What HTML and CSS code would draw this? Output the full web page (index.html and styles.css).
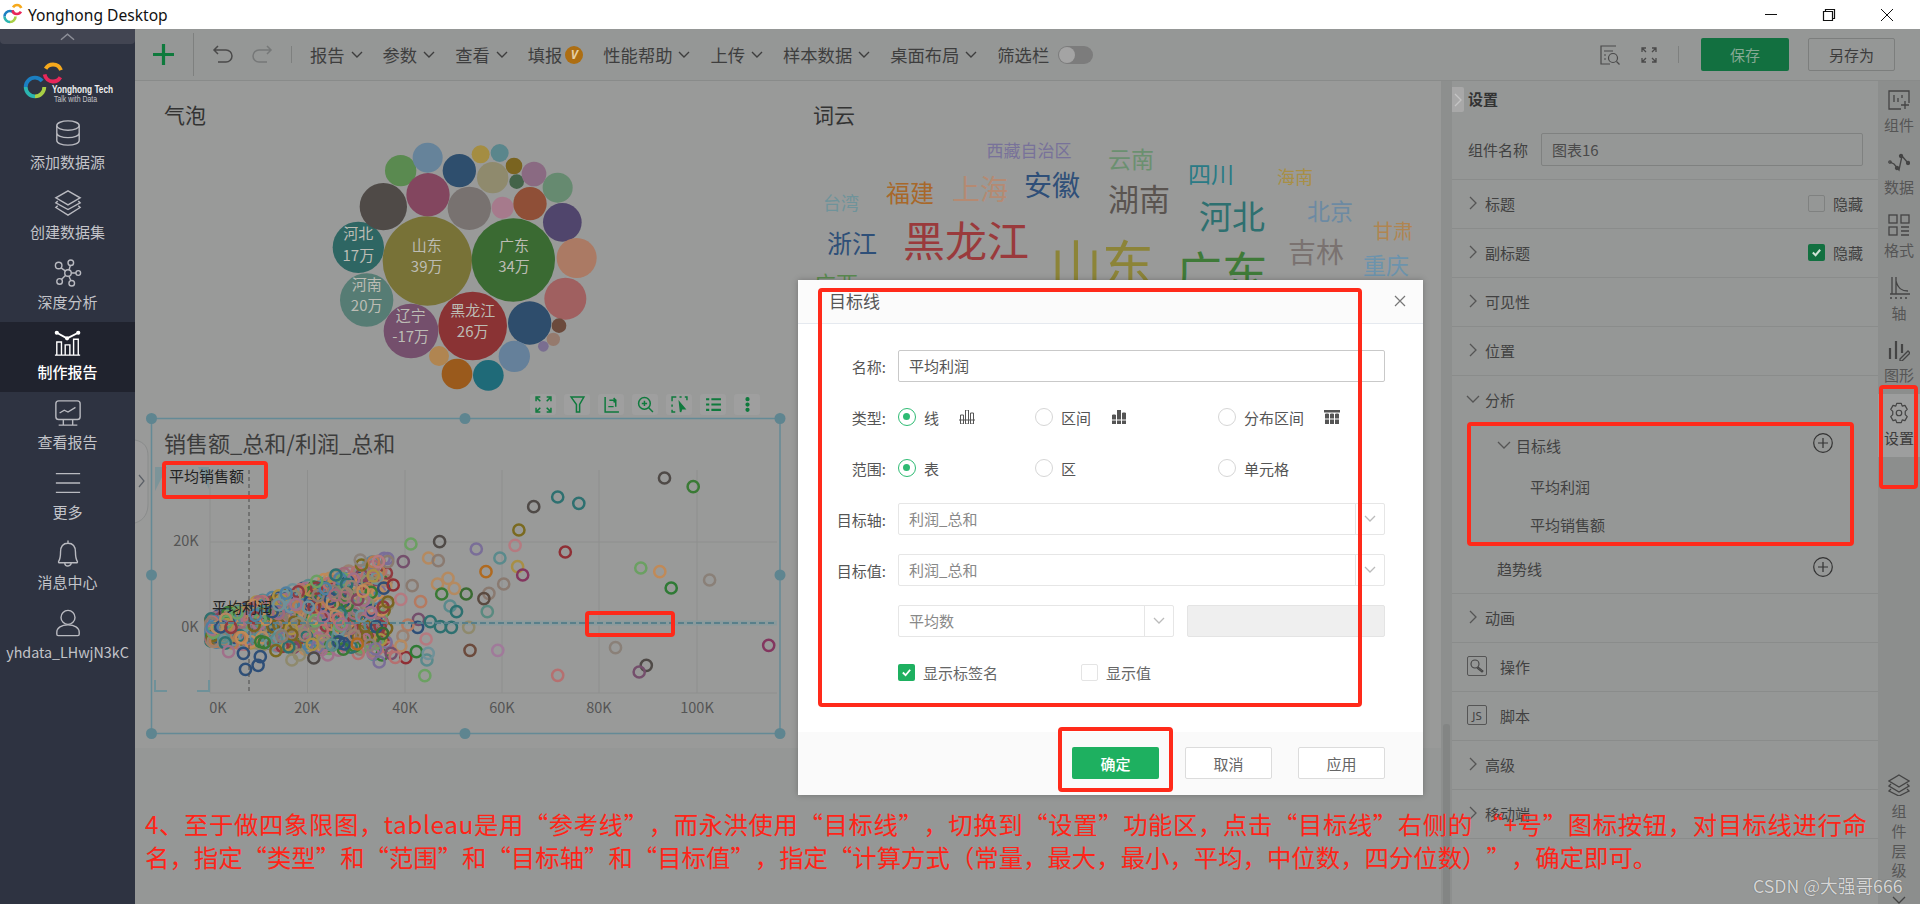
FILE: index.html
```html
<!DOCTYPE html>
<html lang="zh-CN">
<head>
<meta charset="utf-8">
<title>Yonghong Desktop</title>
<link rel="stylesheet" href="styles.css">
</head>
<body>
<div class="window">
  <header class="titlebar">
    <svg class="app-logo" viewBox="0 0 24 24" fill="none" stroke-width="2.600">
      <circle cx="9" cy="13.500" r="5.500" pathLength="360" stroke="#a8cf45" stroke-dasharray="90 270"/>
      <circle cx="9" cy="13.500" r="5.500" pathLength="360" stroke="#2bb5b0" stroke-dasharray="90 270" stroke-dashoffset="-90"/>
      <circle cx="9" cy="13.500" r="5.500" pathLength="360" stroke="#1b7fc2" stroke-dasharray="140 220" stroke-dashoffset="-180"/>
      <circle cx="16" cy="6.500" r="4.500" pathLength="360" stroke="#e8275a" stroke-dasharray="140 220" stroke-dashoffset="-30"/>
      <circle cx="16" cy="6.500" r="4.500" pathLength="360" stroke="#f6a91c" stroke-dasharray="130 230" stroke-dashoffset="-210"/>
    </svg>
    <span class="app-name">Yonghong Desktop</span>
    <div class="win-controls">
      <svg viewBox="0 0 14 14" class="win-icon" fill="none" stroke="#111"><path d="M1 6.500h12"/></svg>
      <svg viewBox="0 0 14 14" class="win-icon" fill="none" stroke="#111" stroke-width="1.200"><path d="M1.500 3.500h9v9h-9zM3.500 3.500v-2h9v9h-2"/></svg>
      <svg viewBox="0 0 14 14" class="win-icon" fill="none" stroke="#111"><path d="M1 1l12 12M13 1L1 13"/></svg>
    </div>
  </header>

  <div class="app">
    <nav class="sidebar">
      <div class="side-tab"><svg viewBox="0 0 16 8" class="side-tab-icon" fill="none" stroke="#8d8f98" stroke-width="1.500"><path d="M1 7l7-6 7 6"/></svg></div>
      <div class="brand">
        <svg viewBox="0 0 110 46" class="brand-logo" fill="none" stroke-width="3.800">
          <circle cx="13" cy="28" r="9.300" pathLength="360" stroke="#a8cf45" stroke-dasharray="90 270"/>
          <circle cx="13" cy="28" r="9.300" pathLength="360" stroke="#2bb5b0" stroke-dasharray="90 270" stroke-dashoffset="-90"/>
          <circle cx="13" cy="28" r="9.300" pathLength="360" stroke="#1b7fc2" stroke-dasharray="140 220" stroke-dashoffset="-180"/>
          <circle cx="31" cy="14" r="8.500" pathLength="360" stroke="#e8275a" stroke-dasharray="140 220" stroke-dashoffset="-30"/>
          <circle cx="31" cy="14" r="8.500" pathLength="360" stroke="#f6a91c" stroke-dasharray="130 230" stroke-dashoffset="-210"/>
          <text x="30" y="34" class="brand-name" textLength="61" lengthAdjust="spacingAndGlyphs">Yonghong Tech</text>
          <text x="32" y="43" class="brand-sub" textLength="43" lengthAdjust="spacingAndGlyphs">Talk with Data</text>
        </svg>
      </div>
      <a class="nav-item">
        <svg class="nav-icon" viewBox="0 0 30 30" fill="none"><ellipse cx="15" cy="7" rx="12" ry="5"/><path d="M3 7v16c0 3 5.500 5 12 5s12-2 12-5V7M3 15c0 3 5.500 5 12 5s12-2 12-5"/></svg>
        <span>添加数据源</span>
      </a>
      <a class="nav-item">
        <svg class="nav-icon" viewBox="0 0 30 30" fill="none"><path d="M15 2l13 7.500-13 7.500L2 9.500zM4 13l-2 1.800L15 22l13-7.200-2-1.800M4 18l-2 1.800L15 28l13-8.200-2-1.800"/></svg>
        <span>创建数据集</span>
      </a>
      <a class="nav-item">
        <svg class="nav-icon" viewBox="0 0 30 30" fill="none"><circle cx="15" cy="15" r="3.500"/><circle cx="18" cy="4" r="3"/><circle cx="5" cy="7" r="3.500"/><circle cx="26" cy="15" r="2.500"/><circle cx="6" cy="24" r="3"/><circle cx="19" cy="26" r="3"/><path d="M16 12l1.500-5M7.500 9.500l5 3.500M18.500 15h5M12.500 17.500L8 22M16 18.500l2 4.500"/></svg>
        <span>深度分析</span>
      </a>
      <a class="nav-item active">
        <svg class="nav-icon" viewBox="0 0 30 30" fill="none"><path d="M3 4l11 6 12-6" stroke-width="2"/><circle cx="3" cy="4" r="1.500" fill="#fff"/><circle cx="14" cy="10" r="1.500" fill="#fff"/><circle cx="26" cy="4" r="1.500" fill="#fff"/><path d="M1 28h27M3 28V14h5v14M12 28V17h5v11M21 28V11h5v17"/></svg>
        <span>制作报告</span>
      </a>
      <a class="nav-item">
        <svg class="nav-icon" viewBox="0 0 30 30" fill="none"><rect x="2" y="2" width="26" height="20" rx="3"/><path d="M6 15l5-3 4 2 8-5M10 22v6M20 22v6M5 28h20"/></svg>
        <span>查看报告</span>
      </a>
      <a class="nav-item">
        <svg class="nav-icon" viewBox="0 0 30 30" fill="none"><path d="M2 5h26M2 15h26M2 25h26"/></svg>
        <span>更多</span>
      </a>
      <a class="nav-item">
        <svg class="nav-icon" viewBox="0 0 30 30" fill="none"><path d="M15 1.500v3M5 24c2-3 2-6 2-10 0-6 3-9.500 8-9.500S23 8 23 14c0 4 0 7 2 10 .5 1-.2 1.500-1 1.500H6c-.8 0-1.500-.5-1-1.500zM11.500 25.500a3.500 3.500 0 0 0 7 0"/></svg>
        <span>消息中心</span>
      </a>
      <a class="nav-item nav-user">
        <svg class="nav-icon" viewBox="0 0 30 30" fill="none"><circle cx="15" cy="9" r="7.500"/><path d="M3 27v-2c0-5 5-8 12-8s12 3 12 8v2c0 1-.5 1.500-1.500 1.500h-21C3.500 28.500 3 28 3 27z"/></svg>
        <span>yhdata_LHwjN3kC</span>
      </a>
    </nav>

    <div class="workspace">
      <div class="toolbar">
        <svg class="tb-plus" viewBox="0 0 21 21" fill="none" stroke="#0f7a3d" stroke-width="3.200"><path d="M10.500 0v21M0 10.500h21"/></svg>
        <i class="sep sep-tall"></i>
        <svg class="tb-history" viewBox="0 0 22 22" fill="none" stroke="#4a4a4a" stroke-width="1.500"><path d="M6 2L2 6l4 4M2 6h12a6 6 0 0 1 0 12H6"/></svg>
        <svg class="tb-history tb-redo" viewBox="0 0 22 22" fill="none" stroke="#767878" stroke-width="1.500"><path d="M16 2l4 4-4 4M20 6H8a6 6 0 0 0 0 12h8"/></svg>
        <i class="sep sep-short"></i>
        <div class="menu">
          <span class="menu-item">报告<svg class="chev" viewBox="0 0 12 8"><path d="M1 1l5 5 5-5"/></svg></span>
          <span class="menu-item">参数<svg class="chev" viewBox="0 0 12 8"><path d="M1 1l5 5 5-5"/></svg></span>
          <span class="menu-item">查看<svg class="chev" viewBox="0 0 12 8"><path d="M1 1l5 5 5-5"/></svg></span>
          <span class="menu-item">填报<b class="vip">V</b></span>
          <span class="menu-item">性能帮助<svg class="chev" viewBox="0 0 12 8"><path d="M1 1l5 5 5-5"/></svg></span>
          <span class="menu-item">上传<svg class="chev" viewBox="0 0 12 8"><path d="M1 1l5 5 5-5"/></svg></span>
          <span class="menu-item">样本数据<svg class="chev" viewBox="0 0 12 8"><path d="M1 1l5 5 5-5"/></svg></span>
          <span class="menu-item">桌面布局<svg class="chev" viewBox="0 0 12 8"><path d="M1 1l5 5 5-5"/></svg></span>
          <span class="menu-item">筛选栏<i class="toggle"><i class="toggle-knob"></i></i></span>
        </div>
        <div class="tb-right">
          <svg class="tb-doc" viewBox="0 0 20 20" fill="none" stroke="#4a4a4a" stroke-width="1.200"><path d="M16 1H1v18h9M4 6h9M4 10h2M4 14h2"/><circle cx="13" cy="13" r="4.500"/><path d="M16.500 16.500l3 3"/></svg>
          <svg class="tb-full" viewBox="0 0 16 16" fill="none" stroke="#4a4a4a" stroke-width="1.300"><path d="M1 5V1h4M1 1l4 4M15 5V1h-4M15 1l-4 4M1 11v4h4M1 15l4-4M15 11v4h-4M15 15l-4-4"/></svg>
          <i class="sep sep-short"></i>
          <button class="btn-save">保存</button>
          <button class="btn-saveas">另存为</button>
        </div>
      </div>

      <div class="stage">
        <main class="canvas">
          <svg class="canvas-art" viewBox="135 81 1306 823">
            <rect x="135" y="81" width="1306" height="667" fill="#999a99"/>
            <text x="164" y="123" class="t-head">气泡</text>
            <text x="813" y="123" class="t-head">词云</text>

            <g transform="translate(320 130) scale(.33333)">
              <circle cx="115" cy="352" r="77" fill="#2e6663"/><circle cx="322" cy="393" r="134" fill="#787237"/><circle cx="580" cy="390" r="125" fill="#3a6a32"/><circle cx="140" cy="510" r="80" fill="#567c74"/><circle cx="273" cy="603" r="82" fill="#744f6c"/><circle cx="458" cy="588" r="103" fill="#8a3334"/><circle cx="190" cy="230" r="71" fill="#4f4a47"/><circle cx="242" cy="122" r="47" fill="#5a8a50"/><circle cx="323" cy="83" r="45" fill="#66839a"/><circle cx="324" cy="194" r="65" fill="#83465f"/><circle cx="418" cy="122" r="50" fill="#2e4e6d"/><circle cx="448" cy="235" r="65" fill="#787270"/><circle cx="482" cy="73" r="27" fill="#a48d42"/><circle cx="539" cy="69" r="27" fill="#5a868c"/><circle cx="518" cy="143" r="47" fill="#8f8a6d"/><circle cx="582" cy="108" r="25" fill="#7a6420"/><circle cx="590" cy="155" r="22" fill="#436349"/><circle cx="642" cy="132" r="37" fill="#8a6a82"/><circle cx="713" cy="173" r="45" fill="#668a70"/><circle cx="548" cy="233" r="33" fill="#a67a8c"/><circle cx="630" cy="221" r="50" fill="#8f4f37"/><circle cx="727" cy="277" r="58" fill="#50456c"/><circle cx="770" cy="384" r="60" fill="#ab7a64"/><circle cx="736" cy="506" r="63" fill="#a06060"/><circle cx="629" cy="579" r="65" fill="#2e4d6c"/><circle cx="717" cy="587" r="22" fill="#6b4a3c"/><circle cx="700" cy="628" r="20" fill="#957a6d"/><circle cx="670" cy="649" r="16" fill="#7a6e90"/><circle cx="583" cy="679" r="47" fill="#65809a"/><circle cx="357" cy="678" r="30" fill="#b08551"/><circle cx="411" cy="732" r="46" fill="#9a5a1c"/><circle cx="505" cy="736" r="46" fill="#1f6a78"/>
              <text x="115" y="307" class="b-label">河北</text><text x="115" y="373" class="b-label">17万</text>
              <text x="320" y="345" class="b-label">山东</text><text x="320" y="407" class="b-label">39万</text>
              <text x="582" y="345" class="b-label">广东</text><text x="582" y="407" class="b-label">34万</text>
              <text x="140" y="461" class="b-label">河南</text><text x="140" y="523" class="b-label">20万</text>
              <text x="272" y="555" class="b-label">辽宁</text><text x="272" y="617" class="b-label">-17万</text>
              <text x="458" y="540" class="b-label">黑龙江</text><text x="458" y="602" class="b-label">26万</text>
            </g>

            <g class="cloud" transform="translate(0 -2)">
              <text x="1029" y="151" font-size="17" fill="#78729a">西藏自治区</text>
              <text x="1131" y="160" font-size="23" fill="#6b9070">云南</text>
              <text x="1211" y="175" font-size="23" fill="#2a7a85">四川</text>
              <text x="1295" y="178" font-size="18" fill="#a88f45">海南</text>
              <text x="1052" y="186" font-size="28" fill="#2f4f78">安徽</text>
              <text x="980" y="190" font-size="28" fill="#b58a72">上海</text>
              <text x="910" y="193" font-size="24" fill="#a8682a">福建</text>
              <text x="1139" y="199" font-size="31" fill="#5a5450">湖南</text>
              <text x="841" y="204" font-size="18" fill="#6f939a">台湾</text>
              <text x="1330" y="212" font-size="23" fill="#6c8aa3">北京</text>
              <text x="1232" y="217" font-size="33" fill="#2e7070">河北</text>
              <text x="1393" y="232" font-size="20" fill="#b08551">甘肃</text>
              <text x="966" y="240" font-size="42" fill="#9a3a3c">黑龙江</text>
              <text x="852" y="244" font-size="25" fill="#2e4f78">浙江</text>
              <text x="1316" y="253" font-size="28" fill="#7a7270">吉林</text>
              <text x="1386" y="266" font-size="23" fill="#6c93ac">重庆</text>
              <text x="1102" y="263" font-size="52" fill="#8c8438">山东</text>
              <text x="1222" y="272" font-size="46" fill="#3f7a38">广东</text>
              <text x="836" y="284" font-size="22" fill="#5a8a50">广西</text>
            </g>

            <g class="plot-grid">
              <path d="M210 470V693M307.500 470V693M405 470V693M502 470V693M599 470V693M697 470V693M210 542H777M210 693H777"/>
            </g>
            <path d="M155 467l12 0-12 24zM209 467h-11l11 22" fill="#6f9199" opacity=".7"/>
            <path d="M155 680v11h12M209 680v11h-12" fill="none" stroke="#6f9199" stroke-width="2"/>
            <path d="M210 623H777" stroke="#8a9a9c" stroke-width="5"/>
            <g id="rings" fill="none" stroke-width="2.500"></g>
            <path d="M249 470V693" stroke="#4b4b4b" stroke-dasharray="4 3"/>
            <path d="M210 623H777" stroke="#587f8a" stroke-width="2" stroke-dasharray="6 3"/>
            <text x="169" y="482" class="t-mark">平均销售额</text>
            <text x="212" y="613" class="t-mark">平均利润</text>
            <g class="t-axis">
              <text x="218" y="713">0K</text><text x="307" y="713">20K</text><text x="405" y="713">40K</text><text x="502" y="713">60K</text><text x="599" y="713">80K</text><text x="697" y="713">100K</text>
              <text x="186" y="546">20K</text><text x="190" y="632">0K</text>
            </g>
            <text x="164" y="452" class="t-chart">销售额_总和/利润_总和</text>

            <path d="M151.500 418.500H780V733.500H151.500z" fill="none" stroke="#648a96" stroke-width="1.500"/>
            <g fill="#5e8590">
              <circle cx="151.500" cy="418.500" r="5.500"/><circle cx="465" cy="418.500" r="5.500"/><circle cx="780" cy="418.500" r="5.500"/>
              <circle cx="151.500" cy="575" r="5.500"/><circle cx="780" cy="575" r="5.500"/>
              <circle cx="151.500" cy="733.500" r="5.500"/><circle cx="465" cy="733.500" r="5.500"/><circle cx="780" cy="733.500" r="5.500"/>
            </g>
            <path d="M135 440c10 2 13 8 13 16v48c0 8-3 16-13 19" fill="#9c9c9c" stroke="#8a8c8c"/>
            <path d="M139 475l5 6-5 6" fill="none" stroke="#5a5f66" stroke-width="1.200"/>
          </svg>

          <div class="chart-actions">
            <span class="chart-btn"><svg viewBox="0 0 16 16"><path d="M1 5V1h4M15 5V1h-4M1 11v4h4M15 11v4h-4M2 2l3 3M14 2l-3 3M2 14l3-3M14 14l-3-3"/></svg></span>
            <span class="chart-btn"><svg viewBox="0 0 16 16"><path d="M2 1h12L10 8v7H7V8z"/></svg></span>
            <span class="chart-btn"><svg viewBox="0 0 16 16"><path d="M2 1v14h13M6 4h6v6M10 2l2 2-2 2M10 10H5"/></svg></span>
            <span class="chart-btn"><svg viewBox="0 0 16 16"><circle cx="7" cy="7" r="5.500"/><path d="M11 11l4 4M4.500 7h5M7 4.500v5"/></svg></span>
            <span class="chart-btn"><svg viewBox="0 0 16 16"><path d="M5 1H1v4M1 8v2M1 13v2h3M8 1h2M13 1h2v3" /><path d="M8 6l5 6h-3l-1 3z" fill="#0f7a3d"/></svg></span>
            <span class="chart-btn"><svg viewBox="0 0 16 16"><path d="M1 3h3M6 3h9M1 8h3M6 8h9M1 13h3M6 13h9" stroke-width="2"/></svg></span>
            <span class="chart-btn"><svg viewBox="0 0 16 16"><circle cx="8" cy="3" r="1.300" fill="#0f7a3d"/><circle cx="8" cy="8" r="1.300" fill="#0f7a3d"/><circle cx="8" cy="13" r="1.300" fill="#0f7a3d"/></svg></span>
          </div>
        </main>

        <div class="scroll-strip"><i class="scroll-thumb"></i></div>

        <aside class="settings">
          <span class="settings-handle"><svg viewBox="0 0 8 16" fill="none" stroke="#c4c4c4" stroke-width="1.300"><path d="M1 2l6 6-6 6"/></svg></span>
          <h2 class="settings-title">设置</h2>
          <div class="name-row">
            <label>组件名称</label>
            <div class="name-input">图表16</div>
          </div>
          <div class="s-row"><svg class="s-chev" viewBox="0 0 8 14"><path d="M1 1l6 6-6 6"/></svg><span>标题</span><span class="s-check"><i class="cb"></i>隐藏</span></div>
          <div class="s-row"><svg class="s-chev" viewBox="0 0 8 14"><path d="M1 1l6 6-6 6"/></svg><span>副标题</span><span class="s-check"><i class="cb cb-on"><svg viewBox="0 0 12 12" fill="none" stroke="#cfe3d6" stroke-width="2.200"><path d="M2 6l3 3 5-6"/></svg></i>隐藏</span></div>
          <div class="s-row"><svg class="s-chev" viewBox="0 0 8 14"><path d="M1 1l6 6-6 6"/></svg><span>可见性</span></div>
          <div class="s-row"><svg class="s-chev" viewBox="0 0 8 14"><path d="M1 1l6 6-6 6"/></svg><span>位置</span></div>
          <section class="s-group">
            <div class="s-group-head"><svg class="s-chev s-chev-down" viewBox="0 0 14 8"><path d="M1 1l6 6 6-6"/></svg><span>分析</span></div>
            <div class="s-sub s-sub-head"><svg class="s-chev s-chev-down" viewBox="0 0 14 8"><path d="M1 1l6 6 6-6"/></svg><span>目标线</span><svg class="s-add" viewBox="0 0 20 20" fill="none" stroke="#333" stroke-width="1.200"><circle cx="10" cy="10" r="9.300"/><path d="M10 5v10M5 10h10"/></svg></div>
            <div class="s-leaf">平均利润</div>
            <div class="s-leaf">平均销售额</div>
            <div class="s-sub s-sub-trend"><span>趋势线</span><svg class="s-add" viewBox="0 0 20 20" fill="none" stroke="#333" stroke-width="1.200"><circle cx="10" cy="10" r="9.300"/><path d="M10 5v10M5 10h10"/></svg></div>
          </section>
          <div class="s-row"><svg class="s-chev" viewBox="0 0 8 14"><path d="M1 1l6 6-6 6"/></svg><span>动画</span></div>
          <div class="s-row"><span class="s-boxicon"><svg viewBox="0 0 16 16" fill="none" stroke="#444" stroke-width="1.100"><circle cx="6" cy="6" r="4"/><path d="M9 9l5 4-1 1-5-4"/></svg></span><span>操作</span></div>
          <div class="s-row"><span class="s-boxicon s-js">JS</span><span>脚本</span></div>
          <div class="s-row"><svg class="s-chev" viewBox="0 0 8 14"><path d="M1 1l6 6-6 6"/></svg><span>高级</span></div>
          <div class="s-row"><svg class="s-chev" viewBox="0 0 8 14"><path d="M1 1l6 6-6 6"/></svg><span>移动端</span></div>
        </aside>

        <aside class="rail">
          <div class="rail-top">
            <a class="rail-item"><svg viewBox="0 0 22 22" class="rail-icon" fill="none"><path d="M13 20H1V2h20v12"/><path d="M6 6v7M10 9v4M14 6v3M17 12v8M13 16h8"/></svg>组件</a>
            <a class="rail-item"><svg viewBox="0 0 22 22" class="rail-icon" fill="none"><path d="M2 11l4 2 5 6 3-14 6 7"/><circle cx="2" cy="11" r="1.200"/><circle cx="9" cy="17" r="1.500" fill="#444"/><circle cx="13" cy="5" r="1.500" fill="#444"/><circle cx="20" cy="12" r="1.500" fill="#444"/></svg>数据</a>
            <a class="rail-item"><svg viewBox="0 0 22 22" class="rail-icon" fill="none"><rect x="1" y="1" width="8" height="8"/><rect x="13" y="1" width="8" height="8"/><rect x="1" y="13" width="8" height="8"/><path d="M13 13h8M13 17h8M13 21h8"/></svg>格式</a>
            <a class="rail-item"><svg viewBox="0 0 22 22" class="rail-icon" fill="none"><path d="M2 17h20M4 0v17M8 0v17M8 4c2 8 6 10 12 10M2 21h2M7 21h2M12 21h2M17 21h2"/></svg>轴</a>
            <a class="rail-item"><svg viewBox="0 0 22 22" class="rail-icon" fill="none"><path d="M2 9v11M8 2v18M14 5v9" stroke-width="2.200"/><path d="M12 20l8-8 2 2-8 8h-2z"/></svg>图形</a>
            <a class="rail-item rail-active"><svg viewBox="0 0 24 24" class="rail-icon" fill="none"><path d="M12 15a3 3 0 1 0 0-6 3 3 0 0 0 0 6z"/><path d="M9.500 1.500h5l1 3 3-.8 2.500 4.300-2.200 2.300 0 3.400 2.200 2.300-2.500 4.300-3-.8-1 3h-5l-1-3-3 .8-2.500-4.300 2.200-2.300 0-3.400-2.200-2.300 2.500-4.300 3 .8z" stroke-linejoin="round"/></svg>设置</a>
          </div>
          <div class="rail-layer">
            <svg viewBox="0 0 22 22" class="rail-icon" fill="none"><path d="M11 1l10 6-10 6L1 7zM3 10l-2 2 10 6 10-6-2-2M3 15l-2 2 10 5 10-5-2-2"/></svg>
            <span>组</span><span>件</span><span>层</span><span>级</span>
            <svg viewBox="0 0 14 8" class="rail-more" fill="none" stroke="#444" stroke-width="1.300"><path d="M1 1l6 6 6-6"/></svg>
          </div>
        </aside>
      </div>
    </div>
  </div>

  <div class="modal">
    <div class="modal-head"><span>目标线</span><svg class="modal-close" viewBox="0 0 12 12" fill="none" stroke="#777" stroke-width="1.200"><path d="M1 1l10 10M11 1L1 11"/></svg></div>
    <div class="modal-body">
      <div class="f-row"><label>名称:</label><div class="f-input">平均利润</div></div>
      <div class="f-row"><label>类型:</label>
        <div class="f-options">
          <span class="opt opt-a"><i class="radio radio-on"></i>线<svg class="opt-icon" viewBox="0 0 16 14" fill="none"><path d="M1.500 5h3v9h-3zM6.500 0h3v14h-3zM11.500 3h3v11h-3zM0 10h16"/></svg></span>
          <span class="opt opt-b"><i class="radio"></i>区间<svg class="opt-icon" viewBox="0 0 16 14" fill="#555"><path d="M1.500 5h3v9h-3zM6.500 0h3v14h-3zM11.500 3h3v11h-3z"/><path d="M0 10h16" stroke="#fff"/></svg></span>
          <span class="opt"><i class="radio"></i>分布区间<svg class="opt-icon" viewBox="0 0 16 14" fill="#555"><path d="M0 0h16v2H0zM1.500 4h3v10h-3zM6.500 4h3v10h-3zM11.500 4h3v10h-3z"/><path d="M0 9h16" stroke="#fff"/></svg></span>
        </div>
      </div>
      <div class="f-row"><label>范围:</label>
        <div class="f-options">
          <span class="opt opt-a"><i class="radio radio-on"></i>表</span>
          <span class="opt opt-b"><i class="radio"></i>区</span>
          <span class="opt"><i class="radio"></i>单元格</span>
        </div>
      </div>
      <div class="f-row"><label>目标轴:</label><div class="f-select"><span>利润_总和</span><i class="f-arrow"><svg viewBox="0 0 12 8" class="f-arrow-icon"><path d="M1 1l5 5 5-5"/></svg></i></div></div>
      <div class="f-row"><label>目标值:</label><div class="f-select"><span>利润_总和</span><i class="f-arrow"><svg viewBox="0 0 12 8" class="f-arrow-icon"><path d="M1 1l5 5 5-5"/></svg></i></div></div>
      <div class="f-row"><label></label>
        <div class="f-split">
          <div class="f-select f-select-half"><span>平均数</span><i class="f-arrow"><svg viewBox="0 0 12 8" class="f-arrow-icon"><path d="M1 1l5 5 5-5"/></svg></i></div>
          <div class="f-disabled"></div>
        </div>
      </div>
      <div class="f-row"><label></label>
        <div class="f-checks">
          <span class="chk chk-a"><i class="box box-on"><svg viewBox="0 0 12 12" fill="none" stroke="#fff" stroke-width="2"><path d="M2 6l3 3 5-6"/></svg></i>显示标签名</span>
          <span class="chk"><i class="box"></i>显示值</span>
        </div>
      </div>
    </div>
    <div class="modal-foot">
      <button class="m-ok">确定</button>
      <button class="m-btn">取消</button>
      <button class="m-btn">应用</button>
    </div>
  </div>

  <i class="mark mark-modal"></i>
  <i class="mark mark-ok"></i>
  <i class="mark mark-tree"></i>
  <i class="mark mark-rail"></i>
  <i class="mark mark-label"></i>
  <i class="mark mark-line"></i>

  <p class="note"><span class="note-wide">4、至于做四象限图，tableau是用“参考线”，而永洪使用“目标线”，切换到“设置”功能区，点击“目标线”右侧的 “+号”图标按钮，对目标线进行命</span><br>名，指定“类型”和“范围”和“目标轴”和“目标值”，指定“计算方式（常量，最大，最小，平均，中位数，四分位数）”，确定即可。</p>
  <span class="watermark">CSDN @大强哥666</span>
</div>
<script src="scatter.js"></script>
</body>
</html>
```
FILE: styles.css
```css
* { box-sizing: border-box; }
html, body { margin: 0; padding: 0; }
body { font-family: "Noto Sans CJK SC", "Noto Sans", sans-serif; color: #3c3c3c; }
i { display: block; font-style: normal; }
button { font-family: inherit; cursor: pointer; }

.window { position: relative; width: 1920px; height: 904px; overflow: hidden; display: flex; flex-direction: column; background: #959796; }

/* title bar */
.titlebar { height: 29px; flex: none; background: #fff; display: flex; align-items: center; }
.app-logo { width: 24px; height: 24px; margin-left: 1px; }
.app-name { margin-left: 3px; font: 15.600px "Noto Sans", sans-serif; color: #111; }
.win-controls { margin-left: auto; display: flex; gap: 44px; padding-right: 26px; }
.win-icon { width: 14px; height: 14px; display: block; }

.app { flex: 1; display: flex; min-height: 0; }

/* sidebar */
.sidebar { width: 135px; flex: none; background: #2e3341; display: flex; flex-direction: column; }
.side-tab { height: 15px; background: #424552; border-radius: 0 0 4px 4px; display: flex; align-items: center; justify-content: center; }
.side-tab-icon { width: 15px; height: 8px; }
.brand { height: 68px; padding: 15px 0 0 22px; }
.brand-logo { width: 110px; height: 46px; display: block; }
.brand-name { font: 700 10.500px "Liberation Sans", sans-serif; fill: #f0f0f0; stroke: none; }
.brand-sub { font: 8.500px "Liberation Sans", sans-serif; fill: #c4c4c8; stroke: none; }
.nav-item { height: 70px; padding-top: 6px; display: flex; flex-direction: column; align-items: center; color: #c3c4c9; font-size: 15px; line-height: 22px; white-space: nowrap; }
.nav-icon { width: 28px; height: 28px; margin: 1px 0 4px; stroke: #b9bac0; stroke-width: 1.500; }
.nav-item.active { background: #20232e; color: #fff; font-weight: 500; }
.nav-item.active .nav-icon { stroke: #fff; }
.nav-user { font-size: 14.300px; }

.workspace { flex: 1; min-width: 0; display: flex; flex-direction: column; }

/* toolbar */
.toolbar { height: 52px; flex: none; display: flex; align-items: center; padding-left: 18px; border-bottom: 1px solid #898b8a; background: #959796; }
.tb-plus { width: 21px; height: 21px; margin-right: 19px; }
.sep { width: 1px; background: #7e807f; }
.sep-tall { height: 43px; margin-right: 18px; }
.sep-short { height: 17px; }
.tb-history { width: 22px; height: 22px; }
.tb-redo { margin: 0 18px 0 17px; }
.menu { margin-left: 18px; display: flex; gap: 20px; font-size: 17.300px; }
.menu-item { display: flex; align-items: center; white-space: nowrap; color: #3e3e3e; }
.chev { width: 12px; height: 8px; margin-left: 6px; fill: none; stroke: #3e3e3e; stroke-width: 1.400; }
.vip { width: 18px; height: 18px; margin-left: 3px; border-radius: 50%; background: #ad6e12; color: #e6d0a6; font: italic 700 12px/18px "Noto Sans", sans-serif; text-align: center; }
.toggle { width: 35px; height: 18px; margin-left: 9px; border-radius: 9px; background: #7c7c7c; padding: 1px; }
.toggle-knob { width: 16px; height: 16px; border-radius: 50%; background: #a4a4a4; }
.tb-right { margin-left: auto; display: flex; align-items: center; padding-right: 25px; }
.tb-doc { width: 20px; height: 20px; margin-right: 21px; }
.tb-full { width: 16px; height: 16px; margin-right: 21px; }
.btn-save { width: 88px; height: 33px; margin-left: 22px; border: 0; border-radius: 2px; background: #127040; color: #86a994; font-size: 15px; }
.btn-saveas { width: 87px; height: 33px; margin-left: 19px; border: 1px solid #7c7e7d; border-radius: 2px; background: transparent; color: #3c3c3c; font-size: 15px; }

/* stage */
.stage { flex: 1; display: flex; min-height: 0; }
.canvas { position: relative; width: 1306px; flex: none; background: #959796; }
.canvas-art { position: absolute; left: 0; top: 0; width: 1306px; height: 823px; display: block; }
.t-head { font-size: 21px; fill: #333; }
.t-chart { font-size: 22px; fill: #3c3c3c; }
.t-mark { font-size: 15px; fill: #222; }
.t-axis text { font-size: 14.500px; fill: #555; text-anchor: middle; }
.b-label { font-size: 45px; fill: #bcbcb4; text-anchor: middle; dominant-baseline: central; }
.cloud text { text-anchor: middle; dominant-baseline: central; }
.plot-grid path { stroke: #8e8f8e; fill: none; }
.chart-actions { position: absolute; left: 395px; top: 313px; display: flex; gap: 8px; }
.chart-btn { width: 26px; height: 21px; background: #9f9f9f; border-radius: 3px; display: flex; align-items: center; justify-content: center; }
.chart-btn svg { width: 17px; height: 17px; fill: none; stroke: #0f7a3d; stroke-width: 1.400; }

.scroll-strip { width: 11px; flex: none; background: #8d8f8e; position: relative; }
.scroll-thumb { position: absolute; left: 2px; top: 643px; bottom: 0; width: 7px; background: #838584; border-radius: 3px 3px 0 0; }

/* settings */
.settings { position: relative; width: 426px; flex: none; background: #959796; font-size: 15px; color: #414141; }
.settings-handle { position: absolute; left: 0; top: 6px; width: 12px; height: 25px; background: #a8a8a8; border-radius: 0 2px 2px 0; display: flex; align-items: center; }
.settings-handle svg { width: 8px; height: 16px; margin-left: 2px; }
.settings-title { margin: 0; height: 38px; padding: 8px 0 0 16px; font-size: 15px; font-weight: 700; line-height: 20px; color: #333; }
.name-row { height: 61px; display: flex; align-items: center; padding: 0 15px 0 16px; border-bottom: 1px solid #8a8c8b; }
.name-row label { width: 73px; flex: none; }
.name-input { flex: 1; height: 33px; border: 1px solid #7f8180; border-radius: 2px; padding-left: 10px; line-height: 31px; color: #4a4a4a; }
.s-row { height: 49px; flex: none; display: flex; align-items: center; padding: 0 15px 2px 17px; border-bottom: 1px solid #8a8c8b; }
.s-chev { width: 8px; height: 14px; margin-right: 8px; fill: none; stroke: #555; stroke-width: 1.300; flex: none; }
.s-chev-down { width: 14px; height: 8px; margin-right: 5px; margin-left: -3px; }
.s-check { margin-left: auto; display: flex; align-items: center; gap: 8px; }
.cb { width: 17px; height: 17px; border: 1px solid #7f8180; border-radius: 2px; }
.cb-on { border: 0; background: #127040; padding: 3px; }
.cb-on svg { display: block; }
.s-group { height: 218px; border-bottom: 1px solid #8a8c8b; }
.s-group-head { height: 46px; display: flex; align-items: center; padding-left: 17px; }
.s-sub { display: flex; align-items: center; padding-right: 45px; }
.s-sub-head { height: 46px; padding-left: 48px; }
.s-sub-trend { height: 49px; padding-left: 45px; }
.s-add { width: 20px; height: 20px; margin-left: auto; position: relative; top: -2px; }
.s-leaf { height: 38px; line-height: 38px; padding-left: 78px; }
.s-boxicon { width: 20px; height: 20px; margin-right: 13px; margin-left: -2px; border: 1.500px solid #555; border-radius: 2px; display: flex; align-items: center; justify-content: center; }
.s-boxicon svg { width: 16px; height: 16px; }
.s-js { font: 11.500px "Noto Sans", sans-serif; }

/* rail */
.rail { width: 42px; flex: none; background: #8c8e8d; display: flex; flex-direction: column; justify-content: space-between; color: #555; font-size: 15px; }
.rail-item { height: 62.600px; display: flex; flex-direction: column; align-items: center; justify-content: center; gap: 3px; line-height: 22px; }
.rail-icon { width: 22px; height: 22px; stroke: #444; stroke-width: 1.300; flex: none; }
.rail-active { background: #9d9e9e; color: #3c3c3c; }
.rail-layer { display: flex; flex-direction: column; align-items: center; line-height: 19.700px; font-size: 15px; }
.rail-layer .rail-icon { margin-bottom: 5px; }
.rail-more { width: 14px; height: 8px; margin-top: 16px; flex: none; }

/* modal */
.modal { position: absolute; left: 798px; top: 280px; width: 625px; height: 515px; background: #fff; box-shadow: 0 0 6px rgba(0,0,0,.25); display: flex; flex-direction: column; font-size: 15px; color: #666; }
.modal-head { height: 44px; flex: none; display: flex; align-items: center; justify-content: space-between; padding: 0 17px 2px 31px; background: #fbfbfb; border-bottom: 1px solid #e5e9ef; font-size: 17px; color: #555; }
.modal-close { width: 12px; height: 12px; }
.modal-body { flex: 1; padding-top: 26px; display: flex; flex-direction: column; gap: 19px; padding-right: 38px; }
.f-row { height: 32px; display: flex; align-items: center; }
.f-row label { width: 88px; margin-right: 12px; flex: none; text-align: right; color: #555; }
.f-input { flex: 1; height: 32px; border: 1px solid #c9c9c9; border-radius: 2px; padding-left: 10px; line-height: 30px; color: #555; }
.f-options { display: flex; align-items: center; }
.opt { display: flex; align-items: center; color: #555; }
.opt-a { width: 137px; }
.opt-b { width: 183px; }
.radio { width: 18px; height: 18px; margin-right: 8px; border: 1.500px solid #d6d6d6; border-radius: 50%; }
.radio-on { border-color: #2ebb73; position: relative; }
.radio-on::after { content: ""; position: absolute; left: 4px; top: 4px; width: 7px; height: 7px; border-radius: 50%; background: #2ebb73; }
.opt-icon { width: 16px; height: 14px; margin-left: 20px; stroke: #555; stroke-width: 1; }
.f-select { flex: 1; height: 32px; display: flex; border: 1px solid #e6e6e6; border-radius: 2px; padding-left: 10px; line-height: 30px; color: #888; }
.f-select span { flex: 1; }
.f-arrow { width: 29px; flex: none; border-left: 1px solid #e6e6e6; display: flex; align-items: center; justify-content: center; }
.f-arrow-icon { width: 12px; height: 8px; fill: none; stroke: #bbb; stroke-width: 1.300; }
.f-split { flex: 1; display: flex; gap: 13px; }
.f-select-half { flex: none; width: 276px; }
.f-disabled { flex: 1; height: 32px; background: #efefef; border: 1px solid #e4e4e4; border-radius: 2px; }
.f-checks { display: flex; align-items: center; }
.chk { display: flex; align-items: center; gap: 8px; color: #666; }
.chk-a { width: 183px; }
.box { width: 17px; height: 17px; border: 1px solid #e4e4e4; border-radius: 2px; }
.box-on { border: 0; background: #1eb060; padding: 3px; }
.box-on svg { display: block; }
.modal-foot { height: 63px; flex: none; background: #fafafa; display: flex; justify-content: flex-end; gap: 26px; padding: 15px 38px 0 0; }
.modal-foot button { height: 32px; font-size: 15px; border-radius: 2px; }
.m-ok { width: 87px; border: 0; background: #1eb060; color: #fff; font-weight: 500; }
.m-btn { width: 87px; border: 1px solid #dcdcdc; background: #fff; color: #666; }

/* annotations */
.mark { position: absolute; border: 4px solid #ff2a1a; border-radius: 4px; }
.mark-modal { left: 818px; top: 288px; width: 544px; height: 419px; }
.mark-ok { left: 1058px; top: 727px; width: 115px; height: 65px; }
.mark-tree { left: 1467px; top: 422px; width: 387px; height: 124px; }
.mark-rail { left: 1879px; top: 385px; width: 39px; height: 104px; }
.mark-label { left: 162px; top: 461px; width: 106px; height: 38px; }
.mark-line { left: 585px; top: 611px; width: 90px; height: 26px; }
.note { position: absolute; left: 145px; top: 807px; margin: 0; font-size: 24.400px; line-height: 33px; color: #ff2418; white-space: nowrap; text-spacing-trim: space-all; font-feature-settings: "palt" 0, "chws" 0; }
.note-wide { letter-spacing: .58px; }
.watermark { position: absolute; left: 1753px; top: 872px; font-size: 17.700px; line-height: 26px; color: #d6d6d6; text-shadow: 0 0 1px #555; white-space: nowrap; }
```
FILE: scatter.js
```js
(function () {
  var g = document.getElementById('rings');
  var NS = 'http://www.w3.org/2000/svg';
  var palette = ['#4f7fa0','#b57a50','#6ba062','#a06a78','#8a7a70','#8f3a40','#6f9199','#a88f45','#7a6e98','#b58a60','#5a8a8c','#c08a58','#3a7a35','#83465f','#2e4f78','#8f8a6d','#a0708a','#9a8070','#2e7070','#7a6420','#b57070'];
  function ring(zx, zy, color) {
    var c = document.createElementNS(NS, 'circle');
    c.setAttribute('cx', (140 + zx / 2.37).toFixed(1));
    c.setAttribute('cy', (380 + zy / 3).toFixed(1));
    c.setAttribute('r', '5.600');
    c.setAttribute('stroke', color);
    g.appendChild(c);
  }
  var seed = 20231;
  function rnd() {
    seed = (seed * 1664525 + 1013904223) % 4294967296;
    return seed / 4294967296;
  }
  var i, x, top, bot, t;
  for (i = 0; i < 900; i++) {
    t = rnd();
    x = 168 + Math.pow(t, 1.4) * 420;
    top = 715 - (x - 165) * 0.44;
    bot = 785 + (x - 165) * 0.1;
    ring(x, top + rnd() * (bot - top), palette[Math.floor(rnd() * palette.length)]);
  }
  var named = [
    [1243,294,'#4f4a47'],[1311,320,'#3a7a35'],[990,351,'#2e7070'],[1040,370,'#2e7070'],[933,380,'#4f4a47'],
    [898,450,'#7a6a20'],[889,496,'#b57a80'],[710,485,'#4f4a47'],[642,492,'#6ba062'],[797,507,'#7a6e98'],
    [1008,516,'#8f2f35'],[853,534,'#5a8a8c'],[684,534,'#b58a60'],[707,542,'#8a7a70'],[895,560,'#a88f45'],
    [820,575,'#b06a20'],[907,585,'#83365f'],[1187,564,'#6ba062'],[1232,575,'#c08a58'],[1259,624,'#2f7a35'],
    [1350,600,'#8a8078'],[862,612,'#8a7a70'],[827,640,'#8a7a70'],[815,656,'#5a4a40'],[773,642,'#3a6a32'],
    [823,695,'#5a8a80'],[779,742,'#8f8a6d'],[782,811,'#6b4a3c'],[848,811,'#a07a9a'],[1127,803,'#8a8078'],
    [1200,856,'#4f4a47'],[1183,876,'#744f6c'],[990,886,'#b57070'],[1490,796,'#83365f'],[675,887,'#6ba062'],
    [680,840,'#5a8a8c'],[630,833,'#8f2f35'],[567,846,'#7a6e98'],[250,868,'#2e4f78'],[280,856,'#2e4f78'],
    [624,545,'#744f6c'],[565,545,'#b57a80'],[525,555,'#7a6a20'],[522,540,'#8a8078'],[705,612,'#b58a60'],
    [730,595,'#b58a60'],[745,625,'#b58a60'],[715,642,'#3a7a35'],[645,617,'#8a7a70'],[665,665,'#b57a60'],
    [618,658,'#b57a80'],[600,615,'#8f2f35'],[735,678,'#5a8a8c'],[750,695,'#2e7070'],[660,718,'#744f6c'],
    [688,725,'#2e7070'],[712,740,'#2e7070'],[738,742,'#2e7070'],[658,742,'#2e4f78'],[635,735,'#b57a60'],
    [623,768,'#9a8070'],[678,777,'#b57a80'],[618,798,'#b58a60'],[655,815,'#2f7a35'],[683,820,'#6f9199'],
    [595,820,'#744f6c'],[605,832,'#b57070'],[575,760,'#3a6a32'],[545,795,'#8a8078'],[515,792,'#b06a20'],
    [412,834,'#4f4a47'],[360,840,'#8f8a6d'],[378,825,'#8f8a6d'],[285,830,'#2e4f78'],[245,820,'#2e4f78'],
    [210,815,'#a0708a'],[322,812,'#7a6a20'],[445,825,'#a0708a'],[455,795,'#5a8a8c']
  ];
  named.forEach(function (p) { ring(p[0], p[1], p[2]); });
})();
```
